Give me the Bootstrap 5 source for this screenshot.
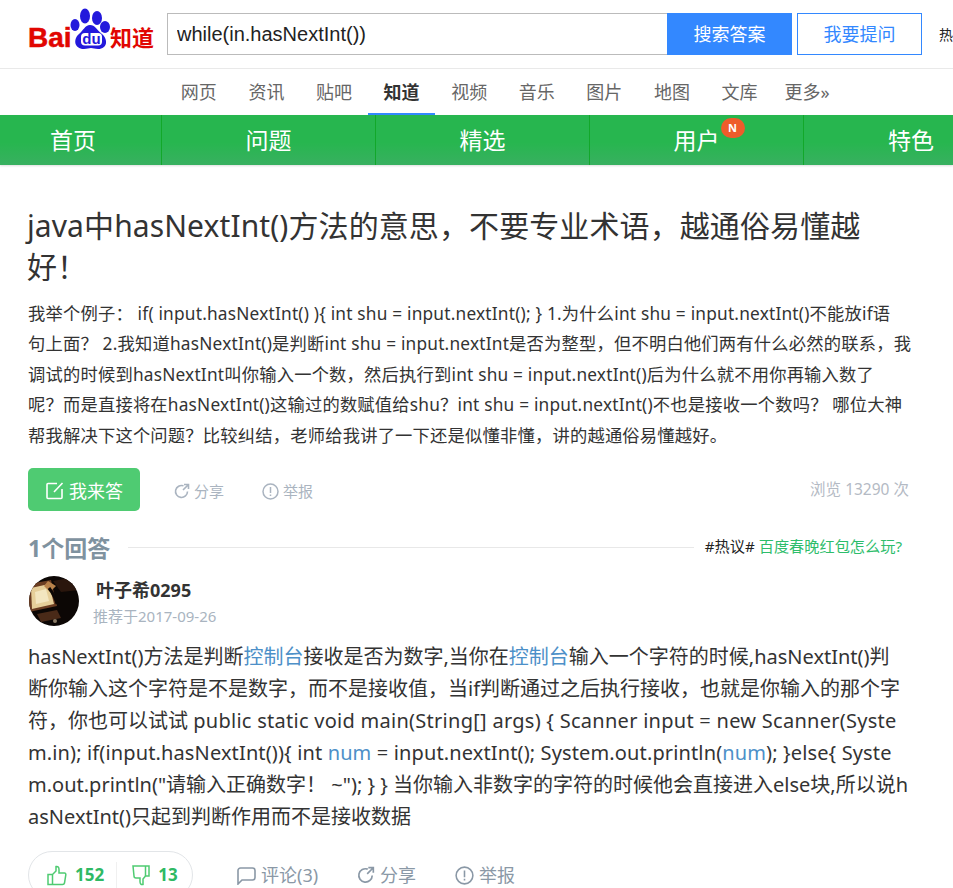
<!DOCTYPE html>
<html lang="zh-CN">
<head>
  <meta charset="UTF-8" />
  <meta name="viewport" content="width=device-width, initial-scale=1.0"/>
  <title>java中hasNextInt()方法的意思</title>
  <link href="https://cdn.jsdelivr.net/npm/bootstrap@5.3.2/dist/css/bootstrap.min.css" rel="stylesheet">
  <style>
    html, body { overflow: hidden; height: 888px; }
    body { font-family: "Noto Sans", "Noto Sans CJK SC", sans-serif; color: #333; background: #fff; }
    .top-bar { height: 69px; padding: 8px 0 0 28px; border-bottom: 1px solid #e9e9e9; white-space: nowrap; overflow: hidden; }
    .logo-svg { width: 127px; height: 42px; flex: none; overflow: visible; }
    .search-wrap { padding-top: 5px; }
    .search-input { flex: none; width: 500px; height: 42px; margin-left: 12px; padding: 0 9px; font-family: "Liberation Sans", "Noto Sans CJK SC", sans-serif; font-size: 20px; color: #222; border: 1px solid #bbb; border-right: 0; }
    .search-btn, .ask-btn { flex: none; width: 125px; height: 42px; font-size: 18px; padding: 0; }
    .search-btn { background: #38f; border-color: #38f; color: #fff; }
    .ask-btn { margin-left: 5px; background: #fff; border-color: #38f; color: #38f; }
    .hot-cut { flex: none; margin: 11px 0 0 17px; font-size: 14px; color: #222; }
    .channel-bar { height: 46px; padding-left: 165px; }
    .channel-item { width: 67.6px; height: 46px; line-height: 46px; text-align: center; font-size: 18px; color: #666; text-decoration: none; white-space: nowrap; }
    .channel-item.on { color: #333; font-weight: 700; border-bottom: 2px solid #38f; }
    .green-bar { height: 50px; background: linear-gradient(#27b64f 55%, #38b060); box-shadow: 0 1px 2px #ddd; }
    .green-item { flex: none; width: 214px; line-height: 50px; text-align: center; font-size: 23px; color: #fff; border-right: 1px solid #12a82a; }
    .green-item.first { width: 162px; padding-right: 15px; }
    .green-item.last { width: 150px; padding-left: 64px; border-right: 0; }
    .user-label { position: relative; }
    .new-dot { position: absolute; left: 47px; top: -6px; width: 24px; height: 20px; line-height: 19px; border-radius: 10px; background: #ee5c2b; font-size: 11px; font-weight: 700; text-align: center; }
    .page-main { padding-left: 28px; }
    .q-title { margin: 40px 0 0 -1px; font-size: 30px; letter-spacing: .1px; line-height: 41px; font-weight: 400; color: #333; white-space: nowrap; }
    .q-desc { margin: 12px 0 0; font-size: 17.3px; letter-spacing: .2px; line-height: 30.4px; color: #333; white-space: nowrap; }
    .action-row { margin-top: 17px; width: 881px; height: 43px; }
    .answer-btn { width: 112px; height: 43px; padding: 3px 0 0; font-size: 18px; border: 0; border-radius: 5px; background: #4fcb72; color: #fff; }
    .soft-link { padding-top: 4px; font-size: 15px; color: #aab4c0; margin-left: 33px; }
    .soft-link.second { margin-left: 38px; }
    .soft-link svg { width: 17px; height: 17px; margin-right: 4px; }
    .view-count { margin-left: auto; font-size: 15.5px; color: #b4bac4; }
    .answer-head { margin-top: 22px; height: 30px; width: 874px; }
    .answer-count { width: 100px; font-size: 23px; font-weight: 700; color: #7f929f; white-space: nowrap; }
    .head-line { flex: 1; height: 1px; background: #e8e8e8; margin: 0 11px 2px 0; }
    .hot-topic { margin-bottom: 3px; font-size: 15.2px; color: #222; white-space: nowrap; }
    .hot-topic a { color: #2ebd6b; text-decoration: none; }
    .author-row { margin-top: 13px; height: 50px; }
    .avatar-svg { width: 50px; height: 50px; margin-left: 1px; flex: none; }
    .author-info { margin: 2px 0 0 14px; }
    .author-name { margin-left: 3px; font-size: 18px; font-weight: 700; color: #333; line-height: 28px; }
    .author-date { font-size: 15px; color: #a9b4c0; line-height: 24px; }
    .answer-body { margin: 15px 0 0; font-size: 20px; line-height: 32px; color: #333; white-space: nowrap; }
    .answer-body a { color: #4d90c8; text-decoration: none; }
    .code-run { letter-spacing: .27px; }
    .code-run-b { letter-spacing: .13px; }
    .foot-row { margin-top: 18px; }
    .vote-pill { flex: none; width: 165px; height: 48px; border: 1px solid #e2e5e8; border-radius: 24px; padding-left: 18px; font-size: 17px; font-weight: 700; color: #2fb964; }
    .vote-sep { width: 1px; height: 26px; background: #f0f0f0; margin: 0 15px 0 12px; }
    .foot-link { height: 48px; font-size: 18px; color: #8a98a6; }
    .foot-link svg { width: 19px; height: 19px; margin-right: 5px; }
    .foot-a { margin-left: 44px; }
    .foot-b { margin-left: 38px; }
    .foot-c { margin-left: 39px; }
  </style>
</head>
<body>
  <div class="top-bar">
    <div class="d-flex align-items-start">
      <svg class="logo-svg" viewBox="0 0 127 42">
        <text x="0" y="39" font-family="Liberation Sans" font-size="28" font-weight="700" fill="#e10601" stroke="#e10601" stroke-width=".5">Bai</text>
        <ellipse cx="57" cy="8" rx="5" ry="7.500" fill="#2319dc"/>
        <ellipse cx="69" cy="10" rx="5" ry="7" fill="#2319dc"/>
        <ellipse cx="47" cy="17" rx="4.500" ry="6" fill="#2319dc"/>
        <ellipse cx="77" cy="19" rx="5" ry="6" fill="#2319dc"/>
        <path d="M62 17c5 0 7 5 12 9 6 5 6 15-4 15-3 0-5-1-7-1s-4 1-7 1c-10 0-11-10-5-15 4-3 6-9 11-9z" fill="#2319dc"/>
        <rect x="53" y="25" width="21" height="12.500" rx="4" fill="#fff"/>
        <text x="63.500" y="36" text-anchor="middle" font-family="Liberation Sans" font-size="15" font-weight="700" fill="#2319dc">du</text>
        <text x="82" y="38" font-family="Noto Sans CJK SC" font-size="22" font-weight="700" fill="#e10601">知道</text>
      </svg>
      <div class="search-wrap d-flex align-items-start">
        <input class="form-control rounded-0 search-input" value="while(in.hasNextInt())">
        <button class="btn rounded-0 search-btn">搜索答案</button>
        <button class="btn rounded-0 ask-btn">我要提问</button>
        <span class="hot-cut">热</span>
      </div>
    </div>
  </div>

  <div class="channel-bar d-flex">
    <a class="channel-item" href="#">网页</a>
    <a class="channel-item" href="#">资讯</a>
    <a class="channel-item" href="#">贴吧</a>
    <a class="channel-item on" href="#">知道</a>
    <a class="channel-item" href="#">视频</a>
    <a class="channel-item" href="#">音乐</a>
    <a class="channel-item" href="#">图片</a>
    <a class="channel-item" href="#">地图</a>
    <a class="channel-item" href="#">文库</a>
    <a class="channel-item" href="#">更多»</a>
  </div>

  <div class="green-bar d-flex">
    <div class="green-item first">首页</div>
    <div class="green-item">问题</div>
    <div class="green-item">精选</div>
    <div class="green-item"><span class="user-label">用户<span class="new-dot">N</span></span></div>
    <div class="green-item last">特色</div>
  </div>

  <div class="page-main">
    <h1 class="q-title">java中hasNextInt()方法的意思，不要专业术语，越通俗易懂越<br>好！</h1>
    <p class="q-desc">我举个例子： if( input.hasNextInt() ){ int shu = input.nextInt(); } 1.为什么int shu = input.nextInt()不能放if语<br>句上面？ 2.我知道hasNextInt()是判断int shu = input.nextInt是否为整型，但不明白他们两有什么必然的联系，我<br>调试的时候到hasNextInt叫你输入一个数，然后执行到int shu = input.nextInt()后为什么就不用你再输入数了<br>呢？而是直接将在hasNextInt()这输过的数赋值给shu？int shu = input.nextInt()不也是接收一个数吗？ 哪位大神<br>帮我解决下这个问题？比较纠结，老师给我讲了一下还是似懂非懂，讲的越通俗易懂越好。</p>

    <div class="action-row d-flex align-items-center">
      <button class="btn answer-btn d-flex align-items-center justify-content-center">
        <svg width="20" height="20" viewBox="0 0 20 20" fill="none" stroke="#fff" stroke-width="1.600" class="me-1"><path d="M12 2.500H3a1 1 0 0 0-1 1v13a1 1 0 0 0 1 1h13a1 1 0 0 0 1-1V8"/><path d="M9 11l8.500-9"/></svg>我来答
      </button>
      <span class="soft-link d-flex align-items-center">
        <svg viewBox="0 0 17 17" fill="none" stroke="#aab4c0" stroke-width="1.600"><path d="M14.500 8.500a6 6 0 1 1-4-5.700"/><path d="M11 1.500h4.500V6M15 2l-5 5"/></svg>分享
      </span>
      <span class="soft-link second d-flex align-items-center">
        <svg viewBox="0 0 17 17" fill="none" stroke="#aab4c0" stroke-width="1.500"><circle cx="8.500" cy="8.500" r="7.500"/><path d="M8.500 4v6M8.500 11.500v1.500"/></svg>举报
      </span>
      <span class="view-count">浏览 13290 次</span>
    </div>

    <div class="answer-head d-flex align-items-center">
      <div class="answer-count">1个回答</div>
      <div class="head-line"></div>
      <div class="hot-topic">#热议# <a href="#">百度春晚红包怎么玩?</a></div>
    </div>

    <div class="author-row d-flex align-items-center">
      <svg class="avatar-svg" viewBox="0 0 50 50">
        <defs><clipPath id="av"><circle cx="25" cy="25" r="25"/></clipPath></defs>
        <g clip-path="url(#av)">
          <rect width="50" height="50" fill="#0c0705"/>
          <path d="M0 8L22 4 28 30 0 36z" fill="#6b3d22"/>
          <path d="M2 12L20 8 25 28 3 33z" fill="#e6cf9a"/>
          <path d="M6 16L17 13 20 25 7 28z" fill="#f3e6c0"/>
          <path d="M19 5L27 10 21 16 15 10z" fill="#b9824a"/>
          <path d="M20 12q6 8 8 16" stroke="#0c0705" stroke-width="3" fill="none"/>
          <path d="M24 5L50 0V14L32 16z" fill="#2a160d"/>
          <path d="M8 38L28 34 32 42 12 46z" fill="#4a2a18"/>
          <circle cx="26" cy="45" r="2" fill="#8a7a66"/>
        </g>
      </svg>
      <div class="author-info">
        <div class="author-name">叶子希0295</div>
        <div class="author-date">推荐于2017-09-26</div>
      </div>
    </div>

    <p class="answer-body">hasNextInt()方法是判断<a href="#">控制台</a>接收是否为数字,当你在<a href="#">控制台</a>输入一个字符的时候,hasNextInt()判<br>断你输入这个字符是不是数字，而不是接收值，当if判断通过之后执行接收，也就是你输入的那个字<br>符，你也可以试试 <span class="code-run">public static void main(String[] args) { Scanner input = new Scanner(Syste</span><br><span class="code-run-b">m.in); if(input.hasNextInt()){ int <a href="#">num</a> = input.nextInt(); System.out.println(<a href="#">num</a>); }else{ Syste</span><br>m.out.println("请输入正确数字！ ~"); } } 当你输入非数字的字符的时候他会直接进入else块,所以说h<br>asNextInt()只起到判断作用而不是接收数据</p>

    <div class="foot-row d-flex">
      <div class="vote-pill d-flex align-items-center">
        <svg width="20" height="21" viewBox="0 0 20 21" fill="none" stroke="#4fcb72" stroke-width="1.500" class="me-2"><path d="M5.500 9.500H1v10h4.500zM5.500 9.500L9 6V1.500c2-.5 3 1 3 3V8h5.500c1 0 1.500 1 1.300 2l-1.300 8c-.2 1-1 1.500-2 1.500h-10"/></svg>152
        <span class="vote-sep"></span>
        <svg width="18" height="21" viewBox="0 0 18 21" fill="none" stroke="#4fcb72" stroke-width="1.500" class="me-2"><path d="M1 1h16v10h-3.500L11 14v5.500c-2 .5-3-1-3-3V13H4c-1 0-2-1-2-2z"/><path d="M13.500 1v10"/></svg>13
      </div>
      <span class="foot-link d-flex align-items-center foot-a">
        <svg viewBox="0 0 19 19" fill="none" stroke="#8a98a6" stroke-width="1.600"><path d="M3.500 2h12a2.500 2.500 0 0 1 2.500 2.500v7a2.500 2.500 0 0 1-2.500 2.500H5l-4 4V4.500A2.500 2.500 0 0 1 3.500 2z"/></svg>评论(3)
      </span>
      <span class="foot-link d-flex align-items-center foot-b">
        <svg viewBox="0 0 17 17" fill="none" stroke="#8a98a6" stroke-width="1.500"><path d="M14.500 8.500a6 6 0 1 1-4-5.700"/><path d="M11 1.500h4.500V6M15 2l-5 5"/></svg>分享
      </span>
      <span class="foot-link d-flex align-items-center foot-c">
        <svg viewBox="0 0 17 17" fill="none" stroke="#8a98a6" stroke-width="1.400"><circle cx="8.500" cy="8.500" r="7.500"/><path d="M8.500 4v6M8.500 11.500v1.500"/></svg>举报
      </span>
    </div>
  </div>
</body>
</html>
